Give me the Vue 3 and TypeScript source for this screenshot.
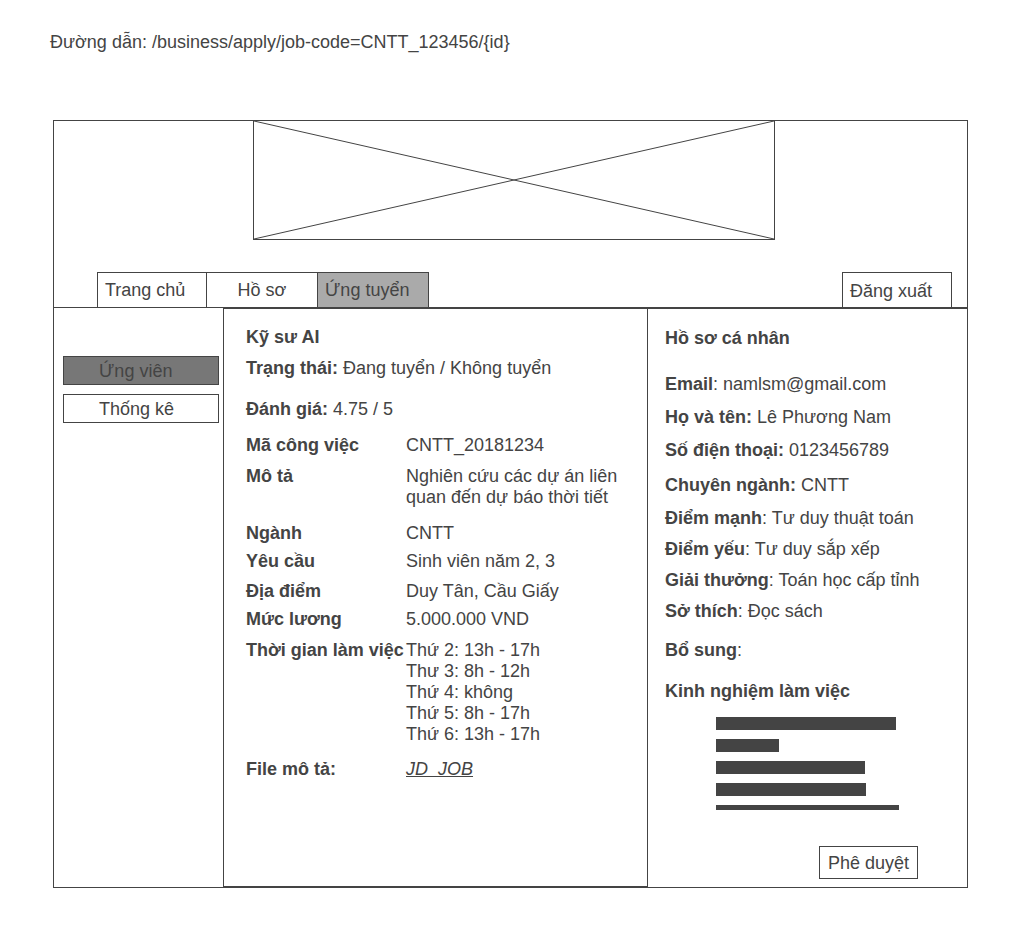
<script setup lang="ts">
type Gap = 'xs' | 's' | 'sm' | 'md' | 'ml' | 'lg' | 'xl' | 'xxl' | 'huge' | 'none'

interface Field {
  label: string
  lines: string[]
  gap: Gap
  href?: string
}

interface ProfileField {
  label: string
  suffix: string
  value: string
  gap: Gap
}

const tabs = [
  { label: 'Trang chủ', kind: 'home', active: false },
  { label: 'Hồ sơ', kind: 'profile', active: false },
  { label: 'Ứng tuyển', kind: 'apply', active: true },
]

const sections = [
  { label: 'Ứng viên', active: true },
  { label: 'Thống kê', active: false },
]

const fields: Field[] = [
  { label: 'Mã công việc', lines: ['CNTT_20181234'], gap: 'sm' },
  { label: 'Mô tả', lines: ['Nghiên cứu các dự án liên quan đến dự báo thời tiết'], gap: 'lg' },
  { label: 'Ngành', lines: ['CNTT'], gap: 'xs' },
  { label: 'Yêu cầu', lines: ['Sinh viên năm 2, 3'], gap: 's' },
  { label: 'Địa điểm', lines: ['Duy Tân, Cầu Giấy'], gap: 'xs' },
  { label: 'Mức lương', lines: ['5.000.000 VND'], gap: 'sm' },
  {
    label: 'Thời gian làm việc',
    lines: ['Thứ 2: 13h - 17h', 'Thư 3: 8h - 12h', 'Thứ 4: không', 'Thứ 5: 8h - 17h', 'Thứ 6: 13h - 17h'],
    gap: 'ml',
  },
  { label: 'File mô tả:', lines: ['JD_JOB'], gap: 'none', href: '#jd-job' },
]

const profile: ProfileField[] = [
  { label: 'Email', suffix: ':', value: 'namlsm@gmail.com', gap: 'md' },
  { label: 'Họ và tên:', suffix: '', value: 'Lê Phương Nam', gap: 'md' },
  { label: 'Số điện thoại:', suffix: '', value: '0123456789', gap: 'ml' },
  { label: 'Chuyên ngành:', suffix: '', value: 'CNTT', gap: 'md' },
  { label: 'Điểm mạnh', suffix: ':', value: 'Tư duy thuật toán', gap: 'sm' },
  { label: 'Điểm yếu', suffix: ':', value: 'Tư duy sắp xếp', gap: 'sm' },
  { label: 'Giải thưởng', suffix: ':', value: 'Toán học cấp tỉnh', gap: 'sm' },
  { label: 'Sở thích', suffix: ':', value: 'Đọc sách', gap: 'xl' },
  { label: 'Bổ sung', suffix: ':', value: '', gap: 'xxl' },
]

const experienceBars: number[] = [180, 63, 149, 150, 183]
</script>

<template>
  <div class="page">
    <p class="path">Đường dẫn: /business/apply/job-code=CNTT_123456/{id}</p>

    <div class="frame">
      <header>
        <div class="banner-row">
          <svg class="banner" viewBox="0 0 520 118" preserveAspectRatio="none" aria-hidden="true">
            <path d="M0 0L520 118M0 118L520 0" vector-effect="non-scaling-stroke" />
          </svg>
        </div>
        <nav class="nav">
          <div class="tabs">
            <a
              v-for="tab in tabs"
              :key="tab.kind"
              href="#"
              class="tab"
              :class="[tab.kind, { active: tab.active }]"
            >{{ tab.label }}</a>
          </div>
          <button type="button" class="logout">Đăng xuất</button>
        </nav>
      </header>

      <div class="body">
        <aside class="sidebar">
          <button
            v-for="section in sections"
            :key="section.label"
            type="button"
            class="section"
            :class="{ active: section.active }"
          >{{ section.label }}</button>
        </aside>

        <main class="job">
          <h1 class="gap-sm">Kỹ sư AI</h1>
          <p class="gap-xxl"><b>Trạng thái:</b> Đang tuyển / Không tuyển</p>
          <p class="gap-lg"><b>Đánh giá:</b> 4.75 / 5</p>
          <dl>
            <div v-for="field in fields" :key="field.label" class="field" :class="`gap-${field.gap}`">
              <dt>{{ field.label }}</dt>
              <dd>
                <a v-if="field.href" :href="field.href" class="file">{{ field.lines[0] }}</a>
                <template v-else>
                  <div v-for="line in field.lines" :key="line">{{ line }}</div>
                </template>
              </dd>
            </div>
          </dl>
        </main>

        <section class="profile-panel">
          <h2 class="gap-huge">Hồ sơ cá nhân</h2>
          <p v-for="item in profile" :key="item.label" :class="`gap-${item.gap}`">
            <b>{{ item.label }}</b>{{ item.suffix }} {{ item.value }}
          </p>
          <h2 class="experience-title">Kinh nghiệm làm việc</h2>
          <div class="experience">
            <div v-for="(bar, index) in experienceBars" :key="index" class="bar" :style="{ width: `${bar}px` }"></div>
          </div>
          <button type="button" class="approve"><span>Phê duyệt</span></button>
        </section>
      </div>
    </div>
  </div>
</template>

<style>
body {
  margin: 0;
  background: #fff;
}
</style>

<style scoped>
.page {
  --ink: #444;
  padding: 32px 56px 40px 53px;
  color: var(--ink);
  font-family: "Liberation Sans", Arial, sans-serif;
  font-size: 18px;
  line-height: 21px;
}

p,
h1,
h2,
dl,
dd {
  margin: 0;
  font-size: inherit;
}

button {
  margin: 0;
  border: 1px solid var(--ink);
  border-radius: 0;
  background: #fff;
  color: inherit;
  font: inherit;
  text-align: left;
}

dt {
  font-weight: bold;
  white-space: nowrap;
}

.path {
  margin: 0 0 67px -3px;
}

.frame {
  border: 1px solid var(--ink);
}

.banner-row {
  display: grid;
  grid-template-columns: 199fr 522fr 192fr;
}

.banner {
  grid-column: 2;
  box-sizing: border-box;
  width: 100%;
  height: 119px;
  border: 1px solid var(--ink);
  border-top: 0;
}

.banner path {
  fill: none;
  stroke: var(--ink);
  stroke-width: 1px;
}

.nav {
  display: flex;
  justify-content: space-between;
  margin-top: 32px;
  padding: 0 15px 0 43px;
  border-bottom: 1px solid var(--ink);
}

.tabs {
  display: flex;
}

.tab {
  box-sizing: border-box;
  width: 111px;
  height: 35px;
  padding: 7px 7px 0;
  border: 1px solid var(--ink);
  border-width: 1px 0 0 1px;
  color: inherit;
  text-decoration: none;
}

.tab.home {
  width: 109px;
}

.tab.profile {
  text-align: center;
}

.tab.apply {
  width: 112px;
  border-right-width: 1px;
}

.tab.active {
  background: #aaa;
}

.logout {
  width: 110px;
  height: 35px;
  padding: 3px 7px 0;
  border-bottom: 0;
}

.body {
  display: grid;
  grid-template-columns: 169fr 425fr 319fr;
}

.sidebar {
  display: flex;
  flex-direction: column;
  gap: 9px;
  padding: 48px 4px 0 9px;
}

.section {
  height: 29px;
  padding: 2px 35px 0;
}

.section.active {
  background: #777;
}

.job {
  padding: 18px 20px 20px 22px;
  border: 1px solid var(--ink);
}

.field {
  display: grid;
  grid-template-columns: 160px 1fr;
}

.file {
  color: inherit;
  font-style: italic;
}

.profile-panel {
  display: flex;
  flex-direction: column;
  padding: 19px 0 8px 17px;
  border-top: 1px solid var(--ink);
}

.experience-title {
  height: 20px;
  margin-bottom: 16px;
  overflow: hidden;
}

.experience {
  display: flex;
  flex-direction: column;
  gap: 9px;
  height: 93px;
  margin-left: 51px;
  overflow: hidden;
}

.bar {
  flex: none;
  height: 13px;
  background: var(--ink);
}

.approve {
  align-self: flex-end;
  min-width: 99px;
  height: 33px;
  margin: 36px 49px 0 0;
  padding: 0 7px 0 8px;
}

.approve span {
  display: block;
  height: 20px;
  overflow: hidden;
}

.gap-xs {
  margin-bottom: 7px;
}

.gap-s {
  margin-bottom: 9px;
}

.gap-sm {
  margin-bottom: 10px;
}

.gap-md {
  margin-bottom: 12px;
}

.gap-ml {
  margin-bottom: 14px;
}

.gap-lg {
  margin-bottom: 15px;
}

.gap-xl {
  margin-bottom: 18px;
}

.gap-xxl {
  margin-bottom: 20px;
}

.gap-huge {
  margin-bottom: 25px;
}
</style>
